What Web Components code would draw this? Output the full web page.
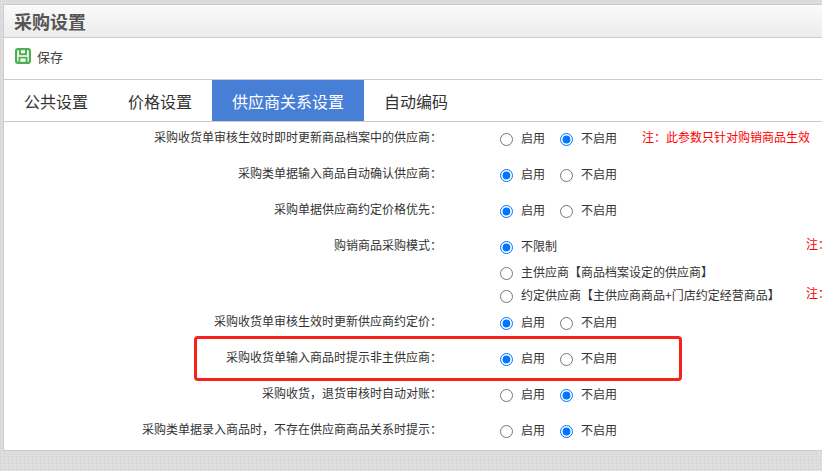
<!DOCTYPE html>
<html lang="zh-CN"><head><meta charset="utf-8">
<style>
html,body{margin:0;height:471px;overflow:hidden}
body{font-family:"Noto Sans CJK SC","Liberation Sans",sans-serif;font-size:12px;color:#333;
background-color:#dcdcdc;
background-image:repeating-linear-gradient(0deg,rgba(255,255,255,.14) 0 1px,transparent 1px 3px),repeating-linear-gradient(90deg,rgba(0,0,0,.025) 0 1px,transparent 1px 4px);}
</style></head><body>
<template id="t-win"><style>
:host{display:block;position:relative;width:900px;height:447px;margin:4px 0 0 3px;box-sizing:border-box;border:1px solid #ccc;border-right:0;background:#fff;overflow:hidden}
.title{height:33px;box-sizing:border-box;padding-left:10px;border-bottom:1px solid #ccc;background:linear-gradient(#fafafa,#ececec);display:flex;align-items:center;font-size:18px;font-weight:700;color:#555}
.tools{height:42px;box-sizing:border-box;border-bottom:1px solid #ccc;padding:0 0 4px 11px;display:flex;align-items:center;font-size:13px;color:#444}
</style><div class="title"><slot name="title"></slot></div><div class="tools"><slot name="tools"></slot></div><slot></slot></template>

<template id="t-save"><style>
:host{display:inline-flex;align-items:center;gap:6px}
svg{display:block;width:16px;height:16px;margin-top:-1px}
</style><svg viewBox="0 0 16 16" fill="none" stroke="#4caf50" stroke-width="2.2"><rect x="1.1" y="1.1" width="13.8" height="13.8" rx="1.8"/><path d="M5 1.5V6.2H11V1.5M4.4 15V9.6H11.6V15" stroke-width="1.9"/></svg><span><slot></slot></span></template>

<template id="t-tabs"><style>
:host{display:flex;height:42px;box-sizing:border-box;border-bottom:1px solid #ccc}
</style><slot></slot></template>

<template id="t-tab"><style>
:host{display:flex;align-items:center;padding:0 20px;font-size:16px;color:#333;height:41px;box-sizing:border-box}
:host([active]){background:#477ed6;color:#fff}
</style><slot></slot></template>

<template id="t-list"><style>
:host{display:flex;flex-direction:column;margin-top:-3px}
</style><slot></slot></template>

<template id="t-row"><style>
:host{display:grid;grid-template-columns:438px auto;column-gap:58px;min-height:36px;align-items:start}
:host([multi]){height:76px}
.l{line-height:36px;text-align:right;color:#333;white-space:nowrap}
.r{display:flex;flex-direction:column;min-height:36px}
:host([multi]) .r{padding-top:8px;gap:6px}
</style><div class="l"><slot name="label"></slot></div><div class="r"><slot></slot></div></template>

<template id="t-line"><style>
:host{display:flex;align-items:center;height:36px}
:host([compact]){height:20px}
</style><slot></slot></template>

<template id="t-opt"><style>
:host{display:inline-flex;align-items:center;margin-right:15px;color:#333;white-space:nowrap}
input{margin:4px 8px 0 0;width:13px;height:13px;accent-color:#0075ff}
</style><input type="radio" tabindex="-1"><span><slot></slot></span></template>

<template id="t-note"><style>
:host{color:#f00;white-space:nowrap;margin-top:-2px}
:host([far]){position:absolute;left:802px;margin-top:-3px}
</style><slot></slot></template>

<template id="t-mark"><style>
:host{position:absolute;left:190px;top:331px;width:482px;height:39px;border:3px solid #f8201a;border-radius:4px;pointer-events:none}
</style></template>

<pg-window>
  <span slot="title">采购设置</span>
  <save-btn slot="tools">保存</save-btn>
  <tab-bar>
    <tab-item>公共设置</tab-item><tab-item>价格设置</tab-item><tab-item active>供应商关系设置</tab-item><tab-item>自动编码</tab-item>
  </tab-bar>
  <set-list>
    <set-row><span slot="label">采购收货单审核生效时即时更新商品档案中的供应商：</span>
      <set-line><radio-opt>启用</radio-opt><radio-opt checked>不启用</radio-opt><set-note style="margin-left:10px">注：此参数只针对购销商品生效</set-note></set-line></set-row>
    <set-row><span slot="label">采购类单据输入商品自动确认供应商：</span>
      <set-line><radio-opt checked>启用</radio-opt><radio-opt>不启用</radio-opt></set-line></set-row>
    <set-row><span slot="label">采购单据供应商约定价格优先：</span>
      <set-line><radio-opt checked>启用</radio-opt><radio-opt>不启用</radio-opt></set-line></set-row>
    <set-row multi><span slot="label">购销商品采购模式：</span>
      <set-line compact><radio-opt checked>不限制</radio-opt><set-note far>注：</set-note></set-line>
      <set-line compact><radio-opt>主供应商【商品档案设定的供应商】</radio-opt></set-line>
      <set-line compact style="margin-top:-3px"><radio-opt>约定供应商【主供应商商品+门店约定经营商品】</radio-opt><set-note far>注：</set-note></set-line>
    </set-row>
    <set-row><span slot="label">采购收货单审核生效时更新供应商约定价：</span>
      <set-line><radio-opt checked>启用</radio-opt><radio-opt>不启用</radio-opt></set-line></set-row>
    <set-row><span slot="label">采购收货单输入商品时提示非主供应商：</span>
      <set-line><radio-opt checked>启用</radio-opt><radio-opt>不启用</radio-opt></set-line></set-row>
    <set-row><span slot="label">采购收货，退货审核时自动对账：</span>
      <set-line><radio-opt>启用</radio-opt><radio-opt checked>不启用</radio-opt></set-line></set-row>
    <set-row><span slot="label">采购类单据录入商品时，不存在供应商商品关系时提示：</span>
      <set-line><radio-opt>启用</radio-opt><radio-opt checked>不启用</radio-opt></set-line></set-row>
  </set-list>
  <mark-box></mark-box>
</pg-window>
<script>
const reg=(n,id,init)=>customElements.define(n,class extends HTMLElement{constructor(){super();this.attachShadow({mode:'open'}).appendChild(document.getElementById(id).content.cloneNode(true));}
connectedCallback(){init&&init(this)}});
reg('pg-window','t-win');reg('save-btn','t-save');reg('tab-bar','t-tabs');reg('tab-item','t-tab');
reg('set-list','t-list');reg('set-row','t-row');reg('set-line','t-line');
reg('radio-opt','t-opt',el=>{el.shadowRoot.querySelector('input').checked=el.hasAttribute('checked')});
reg('set-note','t-note');reg('mark-box','t-mark');
</script>
</body></html>
